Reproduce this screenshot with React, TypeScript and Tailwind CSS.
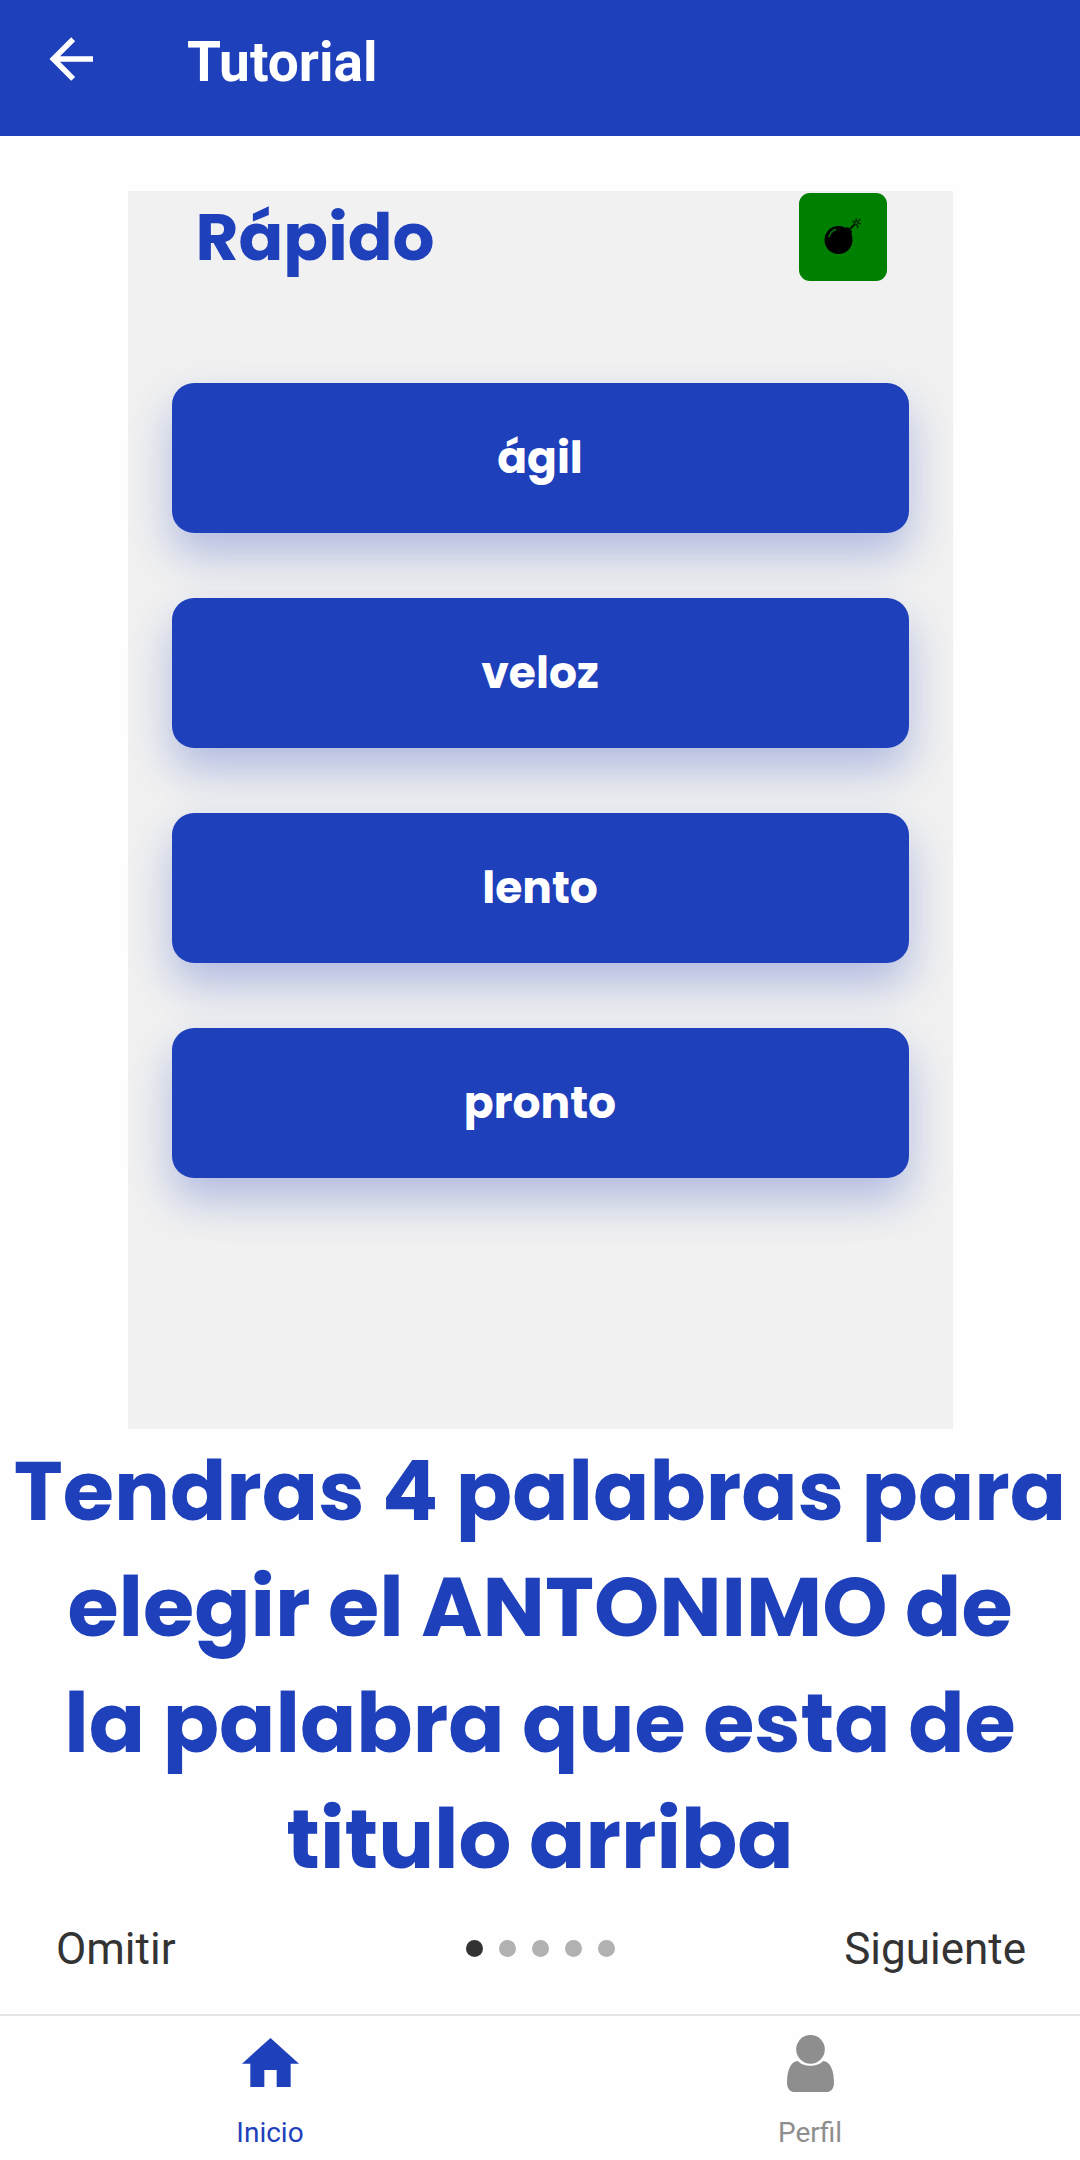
const poppins = "font-[Poppins,Inter,sans-serif]";

const options = ["ágil", "veloz", "lento", "pronto"];
const steps = [0, 1, 2, 3, 4];

function ArrowLeft() {
  return (
    <svg viewBox="0 0 24 24" className="size-[66px]" fill="currentColor" aria-hidden="true">
      <path d="M20 11v2H8l5.5 5.5-1.42 1.42L4.16 12l7.92-7.92L13.5 5.5 8 11h12z" />
    </svg>
  );
}

function Bomb() {
  return (
    <svg viewBox="0 0 88 88" className="size-full" aria-hidden="true">
      <circle cx="39.5" cy="47" r="14" fill="#000" />
      <path d="M45 35.500l4-1.500 4 4.500-1 4z" fill="#000" />
      <path d="M50 37l4.500-4.500 2-1.500" fill="none" stroke="#021502" strokeWidth="1.800" />
      <path
        d="M57 29.500l-3.500-1.500M57.500 29l-.5-3.500M58 29l3.500-3M58 30l3.800.8M57.500 31l1.500 4M56 31l-2 .5"
        fill="none"
        stroke="#032a03"
        strokeWidth="1.600"
      />
      <path d="M30 43.500q2-5.500 6.500-7" fill="none" stroke="#0a5f0a" strokeWidth="2" strokeLinecap="round" />
    </svg>
  );
}

function Home() {
  return (
    <svg viewBox="0 0 171 147" className="h-[49px] w-[57px]" fill="currentColor" aria-hidden="true">
      <path d="M85.500 0L171 77H146V147H104V96H67V147H25V77H0z" />
    </svg>
  );
}

function Person() {
  return (
    <svg viewBox="0 0 141 171" className="h-[57px] w-[47px]" fill="currentColor" aria-hidden="true">
      <circle cx="70.500" cy="43" r="43" />
      <path d="M33 78C47 97 94 97 108 78C130 79 141 107 141 143C141 161 132 171 116 171H25C9 171 0 161 0 143C0 107 11 79 33 78z" />
    </svg>
  );
}

export default function App() {
  return (
    <div className="flex min-h-screen flex-col bg-[#fefefe] font-[Roboto,sans-serif]">
      <header className="flex h-[136px] items-start bg-[#1f40bb] pl-[38px] text-white">
        <button type="button" aria-label="Atrás" className="mt-[26px]">
          <ArrowLeft />
        </button>
        <h1 className="mt-[30px] ml-[83px] text-[55px] leading-[64px] font-bold">Tutorial</h1>
      </header>

      <main className="flex grow flex-col">
        <section className="mx-auto mt-[55px] w-[825px] max-w-full bg-[#f1f1f1] px-11 pb-[251px]">
          <div className="flex items-center justify-between pt-0.5 pr-[22px] pl-6">
            <h2 className={`${poppins} text-[66px] leading-[88px] font-bold text-[#1f40bb]`}>Rápido</h2>
            <div className="size-[88px] rounded-[11px] bg-[#008000]">
              <Bomb />
            </div>
          </div>
          <div className="mt-[102px] flex flex-col gap-[65px]">
            {options.map((word) => (
              <button
                key={word}
                type="button"
                className={`${poppins} h-[150px] rounded-[22px] bg-[#1f40bb] text-[44px] font-bold text-white shadow-[0_22px_44px_rgba(31,64,187,0.3)]`}
              >
                {word}
              </button>
            ))}
          </div>
        </section>

        <p className={`${poppins} mt-1 px-2 text-center text-[83px] leading-[116px] font-bold text-[#1f40bb]`}>
          {"Tendras 4 palabras para elegir el ANTONIMO de la\u00a0palabra que esta de titulo arriba"}
        </p>

        <div className="mt-auto grid h-[117px] grid-cols-3 items-center pr-[54px] pb-3.5 pl-14 text-[44px] leading-[52px] text-[#333333]">
          <button type="button" className="justify-self-start">
            Omitir
          </button>
          <div className="flex gap-4 justify-self-center">
            {steps.map((step) => (
              <span key={step} className={step === 0 ? "size-[17px] rounded-full bg-[#333333]" : "size-[17px] rounded-full bg-[#b1b1b1]"} />
            ))}
          </div>
          <button type="button" className="justify-self-end">
            Siguiente
          </button>
        </div>
      </main>

      <nav className="grid h-[146px] grid-cols-2 border-t-2 border-[#e5e5e5] bg-[#fefefe] text-[28px] leading-8">
        <a href="#inicio" className="flex flex-col items-center justify-between pt-[22px] pb-[11px] text-[#1f40bb]">
          <Home />
          Inicio
        </a>
        <a href="#perfil" className="flex flex-col items-center justify-between pt-[19px] pb-[11px] text-[#8e8e8e]">
          <Person />
          Perfil
        </a>
      </nav>
    </div>
  );
}
